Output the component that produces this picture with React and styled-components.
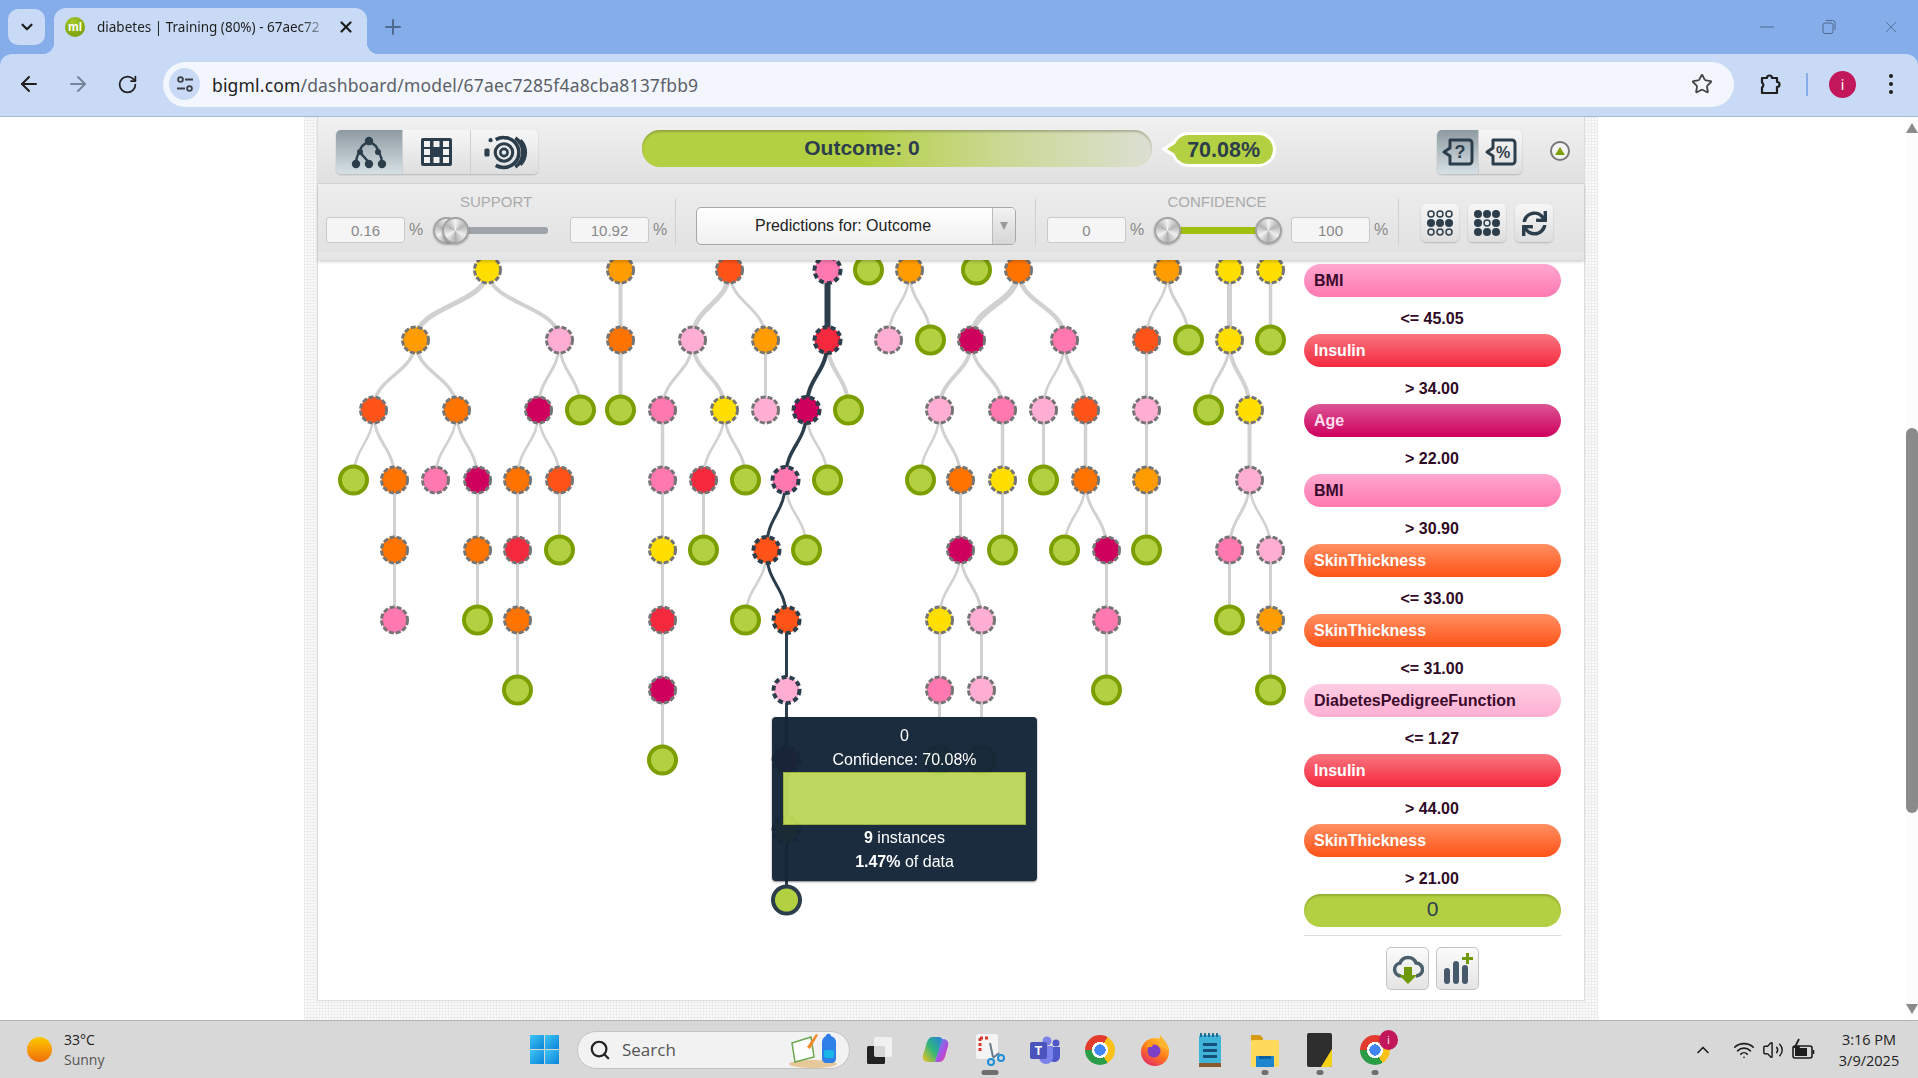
import React from "react";
import styled, { createGlobalStyle } from "styled-components";
import {
  ArrowLeft,
  ArrowRight,
  RotateCw,
  Star,
  ChevronDown,
  ChevronUp,
  Plus,
  X,
  Search,
  Wifi,
  Volume2
} from "lucide-react";
import { FaSync } from "react-icons/fa";

const DARK = "#2c3e4c";
const COLORS = {
  y: "#ffdf00",
  a: "#ff9d00",
  o: "#ff7300",
  r: "#ff5317",
  e: "#f4293e",
  c: "#cf005d",
  p: "#ff78b0",
  l: "#ffaed3",
  g: "#b3d042"
};

// x, colour key, on the selected path
const LEVELS = [
  [[487, "y"], [620, "a"], [729, "r"], [827, "p", 1], [868, "g"], [909, "a"], [976, "g"], [1018, "o"], [1167, "a"], [1229, "y"], [1270, "y"]],
  [[415, "a"], [559, "l"], [620, "o"], [692, "l"], [765, "a"], [827, "e", 1], [888, "l"], [930, "g"], [971, "c"], [1064, "p"], [1146, "r"], [1188, "g"], [1229, "y"], [1270, "g"]],
  [[373, "r"], [456, "o"], [538, "c"], [580, "g"], [620, "g"], [662, "p"], [724, "y"], [765, "l"], [806, "c", 1], [848, "g"], [939, "l"], [1002, "p"], [1043, "l"], [1085, "r"], [1146, "l"], [1208, "g"], [1249, "y"]],
  [[353, "g"], [394, "o"], [435, "p"], [477, "c"], [517, "o"], [559, "r"], [662, "p"], [703, "e"], [745, "g"], [785, "p", 1], [827, "g"], [920, "g"], [960, "o"], [1002, "y"], [1043, "g"], [1085, "o"], [1146, "a"], [1249, "l"]],
  [[394, "o"], [477, "o"], [517, "e"], [559, "g"], [662, "y"], [703, "g"], [766, "r", 1], [806, "g"], [960, "c"], [1002, "g"], [1064, "g"], [1106, "c"], [1146, "g"], [1229, "p"], [1270, "l"]],
  [[394, "p"], [477, "g"], [517, "o"], [662, "e"], [745, "g"], [786, "r", 1], [939, "y"], [981, "l"], [1106, "p"], [1229, "g"], [1270, "a"]],
  [[517, "g"], [662, "c"], [786, "l", 1], [939, "p"], [981, "l"], [1106, "g"], [1270, "g"]],
  [[662, "g"], [786, "c", 1], [939, "g"], [981, "g"]],
  [[786, "y", 1]],
  [[786, "g", 1]]
];

// level of parent, parent x, child x, width, on the selected path
const EDGES = [
  [0, 487, 415, 5], [0, 487, 559, 4], [0, 620, 620, 4], [0, 729, 692, 5], [0, 729, 765, 3], [0, 827, 827, 6, 1], [0, 909, 888, 2.5], [0, 909, 930, 3],
  [0, 1018, 971, 6], [0, 1018, 1064, 4.5], [0, 1167, 1146, 2.5], [0, 1167, 1188, 3], [0, 1229, 1229, 5], [0, 1270, 1270, 3.5],
  [1, 415, 373, 3.5], [1, 415, 456, 3.5], [1, 559, 538, 3], [1, 559, 580, 3], [1, 620, 620, 4], [1, 692, 662, 3], [1, 692, 724, 4], [1, 765, 765, 3],
  [1, 827, 806, 4, 1], [1, 827, 848, 4], [1, 971, 939, 4], [1, 971, 1002, 3.5], [1, 1064, 1043, 2.5], [1, 1064, 1085, 3.5], [1, 1146, 1146, 3], [1, 1229, 1208, 3], [1, 1229, 1249, 4],
  [2, 373, 353, 2.5], [2, 373, 394, 3], [2, 456, 435, 2.5], [2, 456, 477, 3], [2, 538, 517, 2.5], [2, 538, 559, 2.5], [2, 662, 662, 3.5], [2, 724, 703, 2.5], [2, 724, 745, 3],
  [2, 806, 785, 3.5, 1], [2, 806, 827, 2.5], [2, 939, 920, 2.5], [2, 939, 960, 3], [2, 1002, 1002, 3.5], [2, 1043, 1043, 3], [2, 1085, 1085, 3.5], [2, 1146, 1146, 3], [2, 1249, 1249, 4],
  [3, 394, 394, 3], [3, 477, 477, 3], [3, 517, 517, 3], [3, 559, 559, 3], [3, 662, 662, 3], [3, 703, 703, 3], [3, 785, 766, 3, 1], [3, 785, 806, 2.5], [3, 960, 960, 3], [3, 1002, 1002, 3],
  [3, 1085, 1064, 2.5], [3, 1085, 1106, 3], [3, 1146, 1146, 3], [3, 1249, 1229, 3], [3, 1249, 1270, 2.5],
  [4, 394, 394, 3], [4, 477, 477, 3], [4, 517, 517, 3], [4, 662, 662, 3], [4, 766, 745, 2.5], [4, 766, 786, 3, 1], [4, 960, 939, 2.5], [4, 960, 981, 3], [4, 1106, 1106, 3], [4, 1229, 1229, 3], [4, 1270, 1270, 3],
  [5, 517, 517, 3], [5, 662, 662, 3], [5, 786, 786, 3, 1], [5, 939, 939, 3], [5, 981, 981, 3], [5, 1106, 1106, 3], [5, 1270, 1270, 3],
  [6, 662, 662, 3], [6, 786, 786, 3, 1], [6, 939, 939, 3], [6, 981, 981, 3],
  [7, 786, 786, 3, 1], [8, 786, 786, 3, 1]
];

const levelY = level => 270 + level * 70;

const PILLS = [
  { name: "BMI", tone: "pink", rule: "<= 45.05" },
  { name: "Insulin", tone: "red", rule: "> 34.00" },
  { name: "Age", tone: "crimson", rule: "> 22.00" },
  { name: "BMI", tone: "pink", rule: "> 30.90" },
  { name: "SkinThickness", tone: "orange", rule: "<= 33.00" },
  { name: "SkinThickness", tone: "orange", rule: "<= 31.00" },
  { name: "DiabetesPedigreeFunction", tone: "light", rule: "<= 1.27" },
  { name: "Insulin", tone: "red", rule: "> 44.00" },
  { name: "SkinThickness", tone: "orange", rule: "> 21.00" }
];

const TONES = {
  pink: ["#ffa7cf", "#ff78b0", "#3a0a2c"],
  red: ["#f9757f", "#f4293e", "#fff"],
  crimson: ["#dc5595", "#cf005d", "#fde"],
  orange: ["#ff8f62", "#ff5317", "#fff"],
  light: ["#ffcde2", "#ffaed3", "#3a0a2c"]
};

const GlobalStyle = createGlobalStyle`
  html, body {
    margin: 0;
    padding: 0;
    width: 1918px;
    height: 1078px;
    overflow: hidden;
    background: #fff;
    font-family: "Liberation Sans", Arial, sans-serif;
  }
  * { box-sizing: border-box; }
`;

const Screen = styled.div`
  width: 1918px;
  height: 1078px;
  display: flex;
  flex-direction: column;
`;

const Chrome = styled.div`
  background: #85ade9;
  font-family: "Noto Sans", "Open Sans", sans-serif;
`;

const TabStrip = styled.div`
  height: 54px;
  display: flex;
  align-items: flex-end;
  padding-left: 8px;
  padding-right: 15px;
`;

const TabMenu = styled.div`
  width: 37px;
  height: 36px;
  margin-bottom: 9px;
  border-radius: 10px;
  background: #c8daf5;
  display: flex;
  align-items: center;
  justify-content: center;
  color: #1f1f1f;
`;

const Tab = styled.div`
  position: relative;
  width: 313px;
  height: 46px;
  margin-left: 9px;
  padding: 0 12px 8px 11px;
  background: #c8daf5;
  border-radius: 12px 12px 0 0;
  display: flex;
  align-items: center;
  &::before,
  &::after {
    content: "";
    position: absolute;
    bottom: 0;
    width: 12px;
    height: 12px;
  }
  &::before {
    left: -12px;
    background: radial-gradient(circle at 0 0, transparent 12px, #c8daf5 12.5px);
  }
  &::after {
    right: -12px;
    background: radial-gradient(circle at 100% 0, transparent 12px, #c8daf5 12.5px);
  }
`;

const Favicon = styled.span`
  width: 20px;
  height: 20px;
  border-radius: 50%;
  flex: none;
  background: radial-gradient(circle at 40% 30%, #a6c92b, #6f9400);
  color: #fff;
  font: bold 12px/20px "Liberation Sans", sans-serif;
  text-align: center;
`;

const TabTitle = styled.span`
  width: 232px;
  margin-left: 12px;
  font-size: 13.5px;
  white-space: nowrap;
  color: #1f1f1f;
  -webkit-mask-image: linear-gradient(90deg, #000 88%, transparent);
  mask-image: linear-gradient(90deg, #000 88%, transparent);
`;

const TabClose = styled.span`
  margin-left: auto;
  display: flex;
  color: #1f1f1f;
`;

const NewTab = styled.span`
  margin: 0 0 15px 14px;
  display: flex;
  color: #4f6a8f;
`;

const WindowButtons = styled.div`
  margin-left: auto;
  margin-bottom: 15px;
  display: flex;
  gap: 38px;
  color: #4f6a8f;
`;

const WindowButton = styled.span`
  width: 24px;
  height: 24px;
  display: flex;
  align-items: center;
  justify-content: center;
`;

const Toolbar = styled.div`
  display: flex;
  align-items: center;
  height: 63px;
  padding: 8px 0 10px 17px;
  background: #c8daf5;
  border-radius: 12px 12px 0 0;
  border-bottom: 1px solid #a9b9d0;
`;

const NavButton = styled.span`
  width: 24px;
  height: 24px;
  margin-right: ${p => p.$gap || 0}px;
  display: flex;
  align-items: center;
  justify-content: center;
  color: ${p => (p.$muted ? "#76859b" : "#1f1f1f")};
`;

const Address = styled.div`
  margin-left: 24px;
  width: 1571px;
  height: 45px;
  padding: 0 21px 0 6px;
  border-radius: 23px;
  background: #f3f7fd;
  display: flex;
  align-items: center;
`;

const SiteInfo = styled.span`
  width: 31px;
  height: 32px;
  border-radius: 50%;
  background: #c8daf5;
  display: flex;
  align-items: center;
  justify-content: center;
`;

const Url = styled.div`
  margin-left: 12px;
  padding-top: 1px;
  font-size: 17.5px;
  letter-spacing: 0.17px;
  color: #5b6068;
  b {
    font-weight: 400;
    color: #1c1c1c;
  }
`;

const StarSlot = styled.span`
  margin-left: auto;
  display: flex;
  color: #454545;
`;

const Puzzle = styled.span`
  margin-left: 24px;
  display: flex;
`;

const ToolbarRule = styled.span`
  margin-left: 24px;
  width: 2px;
  height: 23px;
  background: #85ade9;
`;

const Avatar = styled.span`
  margin-left: 21px;
  width: 27px;
  height: 27px;
  border-radius: 50%;
  background: #c2185b;
  color: #fff;
  font-size: 14px;
  line-height: 27px;
  text-align: center;
`;

const Kebab = styled.span`
  margin-left: 33px;
  width: 4px;
  display: flex;
  flex-direction: column;
  gap: 4px;
  i {
    width: 4px;
    height: 4px;
    border-radius: 50%;
    background: #1f1f1f;
  }
`;

const Page = styled.div`
  flex: 1;
  display: flex;
  min-height: 0;
`;

const PageBody = styled.div`
  flex: 1;
  padding-left: 304px;
`;

const Frame = styled.div`
  width: 1294px;
  height: 100%;
  padding: 0 13px 19px 13px;
  background-color: #fbfbfb;
  background-image: linear-gradient(#ececec 1px, transparent 1px), linear-gradient(90deg, #ececec 1px, transparent 1px);
  background-size: 3px 3px;
`;

const Panel = styled.div`
  height: 100%;
  display: flex;
  flex-direction: column;
  background: #fff;
  border: 1px solid #dedede;
  border-top: 0;
`;

const HeadTop = styled.div`
  height: 67px;
  padding: 13px 14px 0 18px;
  display: flex;
  align-items: flex-start;
  background: linear-gradient(#f1f1f1, #e0e0e0);
  border-bottom: 1px solid #d2d2d2;
`;

const HeadBottom = styled.div`
  height: 76px;
  padding-left: 8px;
  display: flex;
  align-items: flex-start;
  background: linear-gradient(#ededed, #e2e2e2 89%, #e8e8e8 89%, #e4e4e4);
  box-shadow: 0 2px 3px rgba(0, 0, 0, 0.18);
  position: relative;
  z-index: 1;
`;

const ButtonGroup = styled.div`
  display: flex;
  margin-left: ${p => p.$left || 0}px;
  border-radius: 5px;
  box-shadow: 0 1px 2px rgba(0, 0, 0, 0.2);
`;

const ToggleButton = styled.div`
  width: ${p => p.$w}px;
  height: 44px;
  display: flex;
  align-items: center;
  justify-content: center;
  background: ${p => (p.$active ? "linear-gradient(#8e9aa2, #d7e1e5)" : "linear-gradient(#f6f6f6, #dedede)")};
  border-right: 1px solid #cfcfcf;
  &:first-child {
    border-radius: 5px 0 0 5px;
  }
  &:last-child {
    border-radius: 0 5px 5px 0;
    border-right: 0;
  }
`;

const OutcomeBar = styled.div`
  margin-left: 104px;
  width: 514px;
  height: 37px;
  padding-right: 70px;
  border-radius: 18px;
  background: linear-gradient(90deg, #b3d042 0, #b3d042 42%, #cbd997 72%, #dcdfd2 100%);
  box-shadow: inset 0 2px 2px rgba(90, 90, 60, 0.35);
  color: ${DARK};
  font-size: 21px;
  font-weight: 700;
  line-height: 35px;
  text-align: center;
`;

const Bubble = styled.div`
  position: relative;
  margin: 2px 0 0 19px;
  width: 106px;
  height: 35px;
  border: 3px solid #fff;
  border-radius: 18px;
  background: #b3d042;
  color: ${DARK};
  font-size: 21.5px;
  font-weight: 700;
  line-height: 30px;
  text-align: center;
  &::before,
  &::after {
    content: "";
    position: absolute;
    border-style: solid;
    border-color: transparent;
    border-left-width: 0;
  }
  &::before {
    left: -13px;
    top: 6px;
    border-width: 8px 12px 8px 0;
    border-right-color: #fff;
  }
  &::after {
    left: -7px;
    top: 9px;
    border-width: 5px 8px 5px 0;
    border-right-color: #b3d042;
  }
`;

const CollapseToggle = styled.div`
  margin: 11px 0 0 28px;
  width: 20px;
  height: 20px;
  border-radius: 50%;
  border: 2px solid #777;
  background: #f4f4f4;
  display: flex;
  align-items: center;
  justify-content: center;
  &::after {
    content: "";
    border: 5px solid transparent;
    border-top: 0;
    border-bottom: 8px solid #7ca000;
  }
`;

const SliderGroup = styled.div`
  margin-left: ${p => p.$left || 0}px;
  padding-top: 10px;
`;

const GroupLabel = styled.div`
  width: 340px;
  height: 16px;
  margin-bottom: 6px;
  font-size: 15px;
  line-height: 16px;
  color: #aaa;
  text-align: center;
`;

const GroupControls = styled.div`
  display: flex;
  align-items: center;
`;

const NumberBox = styled.div`
  width: 79px;
  height: 26px;
  border: 1px solid #c9c9c9;
  border-radius: 3px;
  background: #f5f5f5;
  font-size: 15px;
  line-height: 25px;
  text-align: center;
  color: #888;
`;

const Percent = styled.span`
  width: 22px;
  font-size: 16px;
  color: #888;
  text-align: center;
`;

const Slider = styled.div`
  position: relative;
  width: 143px;
  height: 28px;
`;

const SliderTrack = styled.div`
  position: absolute;
  left: ${p => p.$from}px;
  width: ${p => p.$to - p.$from}px;
  top: 11px;
  height: 7px;
  border-radius: 3px;
  background: ${p => p.$color};
`;

const SliderHandle = styled.div`
  position: absolute;
  left: ${p => p.$at - 13.5}px;
  top: 1px;
  width: 27px;
  height: 27px;
  border-radius: 50%;
  border: 2px solid #a3a3a3;
  background: conic-gradient(#f2f2f2, #b5b5b5, #efefef, #b0b0b0, #f2f2f2, #b5b5b5, #f2f2f2);
  box-shadow: 0 1px 2px rgba(0, 0, 0, 0.3);
`;

const HeadRule = styled.div`
  margin: 15px 0 0 ${p => p.$left}px;
  width: 1px;
  height: 46px;
  background: #d0d0d0;
`;

const SelectBox = styled.div`
  margin: 23px 0 0 20px;
  width: 320px;
  height: 38px;
  display: flex;
  border: 1px solid #a8a8a8;
  border-radius: 5px;
  overflow: hidden;
  background: linear-gradient(#fff, #f0f0f0);
  font-size: 16px;
`;

const SelectValue = styled.div`
  flex: 1;
  padding-right: 3px;
  line-height: 36px;
  text-align: center;
  color: #222;
`;

const SelectArrow = styled.div`
  width: 23px;
  border-left: 1px solid #bbb;
  background: linear-gradient(#f2f2f2, #d6d6d6);
  display: flex;
  align-items: center;
  justify-content: center;
  &::after {
    content: "";
    border: 4px solid transparent;
    border-bottom: 0;
    border-top: 8px solid #9a9a9a;
  }
`;

const SquareButton = styled.div`
  margin: 20px 0 0 ${p => p.$left}px;
  width: 38px;
  height: 38px;
  border-radius: 5px;
  background: linear-gradient(#f6f6f6, #dedede);
  box-shadow: 0 1px 2px rgba(0, 0, 0, 0.2);
  display: flex;
  align-items: center;
  justify-content: center;
  color: ${DARK};
`;

const Body = styled.div`
  flex: 1;
  min-height: 0;
  display: flex;
`;

const TreeArea = styled.div`
  position: relative;
  width: 972px;
  flex: none;
  overflow: hidden;
`;

const TreeSvg = styled.svg`
  display: block;
`;

const Tooltip = styled.div`
  position: absolute;
  left: 454px;
  top: 457px;
  width: 265px;
  height: 164px;
  padding: 7px 11px 0;
  border-radius: 4px;
  background: #142638;
  opacity: 0.97;
  box-shadow: 0 1px 2px rgba(0, 0, 0, 0.5);
  color: #fff;
  font-size: 16px;
  line-height: 24px;
  text-align: center;
  b {
    font-weight: 700;
  }
`;

const TooltipBar = styled.div`
  height: 53px;
  margin-bottom: 1px;
  border: 1px solid #9ab040;
  background: #bcd65a;
`;

const Sidebar = styled.div`
  margin-left: 14px;
  width: 257px;
  padding-top: 4px;
`;

const Pill = styled.div`
  height: 33px;
  padding-left: 10px;
  border-radius: 17px;
  background: linear-gradient(${p => TONES[p.$tone][0]}, ${p => TONES[p.$tone][1]});
  color: ${p => TONES[p.$tone][2]};
  font-size: 16px;
  font-weight: 700;
  line-height: 33px;
`;

const Rule = styled.div`
  height: 37px;
  padding: 3px 1px 0 0;
  font-size: 16px;
  font-weight: 700;
  line-height: 37px;
  text-align: center;
  color: #2f0a26;
`;

const ResultPill = styled.div`
  height: 33px;
  border-radius: 17px;
  background: #b3d042;
  box-shadow: inset 0 2px 2px rgba(90, 110, 20, 0.35);
  color: ${DARK};
  font-size: 21px;
  line-height: 30px;
  text-align: center;
`;

const SidebarRule = styled.div`
  margin-top: 8px;
  height: 1px;
  background: #ddd;
`;

const SidebarActions = styled.div`
  margin-top: 11px;
  display: flex;
  justify-content: center;
  gap: 7px;
`;

const ActionButton = styled.div`
  width: 43px;
  height: 43px;
  border: 1px solid #c4c4c4;
  border-radius: 5px;
  background: linear-gradient(#fbfbfb, #e4e4e4);
  display: flex;
  align-items: center;
  justify-content: center;
`;

const Scrollbar = styled.div`
  width: 12px;
  flex: none;
  display: flex;
  flex-direction: column;
  align-items: center;
  padding: 6px 0;
  background: #fcfcfc;
`;

const ScrollArrow = styled.span`
  border: 6px solid transparent;
  ${p => (p.$down ? "border-bottom: 0; border-top: 10px solid #8a8a8a;" : "border-top: 0; border-bottom: 10px solid #8a8a8a;")}
`;

const ScrollThumb = styled.div`
  margin: 295px 0 auto;
  width: 12px;
  height: 385px;
  background: #8a8a8a;
  border-radius: 6px;
`;

const Taskbar = styled.div`
  height: 58px;
  flex: none;
  padding-left: 27px;
  display: flex;
  align-items: center;
  background: #d8d8d8;
  border-top: 1px solid #b4b4b4;
  font-family: "Open Sans", "Noto Sans", sans-serif;
`;

const Weather = styled.div`
  width: 503px;
  flex: none;
  display: flex;
  align-items: center;
  gap: 12px;
`;

const Sun = styled.span`
  width: 25px;
  height: 25px;
  border-radius: 50%;
  background: linear-gradient(#ffc800, #ee6e08);
`;

const WeatherText = styled.div`
  font-size: 14px;
  line-height: 20px;
  color: #222;
  small {
    display: block;
    font-size: 14px;
    color: #555;
  }
`;

const StartLogo = styled.div`
  width: 29px;
  height: 29px;
  flex: none;
  display: grid;
  grid-template-columns: 1fr 1fr;
  gap: 1px;
  i {
    background: linear-gradient(135deg, #3fc4f5, #0a84d8);
  }
`;

const SearchBox = styled.div`
  margin-left: 18px;
  width: 273px;
  height: 38px;
  flex: none;
  padding: 0 10px 0 11px;
  display: flex;
  align-items: center;
  border-radius: 19px;
  background: #f2f2f2;
  border: 1px solid #c4c4c4;
  color: #555;
  font-size: 17px;
`;

const SearchLabel = styled.span`
  margin-left: 11px;
  flex: 1;
`;

const AppSlots = styled.div`
  margin-left: 2px;
  display: flex;
`;

const AppSlot = styled.div`
  position: relative;
  width: 55px;
  height: 57px;
  display: flex;
  align-items: center;
  justify-content: center;
  &::after {
    content: "";
    display: ${p => (p.$mark ? "block" : "none")};
    position: absolute;
    bottom: 3px;
    left: 50%;
    transform: translateX(-50%);
    width: ${p => p.$mark}px;
    height: 5px;
    border-radius: 3px;
    background: #6f6f6f;
  }
`;

const ChromeBall = styled.span`
  width: 30px;
  height: 30px;
  border-radius: 50%;
  background: radial-gradient(circle, #4285f4 0 26%, #fff 27% 38%, transparent 39%),
    conic-gradient(from -90deg, #e33b2e 0 120deg, #fbc116 120deg 240deg, #2a9d46 240deg 360deg);
`;

const AppBadge = styled.span`
  position: absolute;
  left: 32px;
  top: 9px;
  width: 19px;
  height: 20px;
  border-radius: 50%;
  background: #c2185b;
  color: #fff;
  font-size: 10px;
  line-height: 20px;
  text-align: center;
`;

const Tray = styled.div`
  margin-left: auto;
  display: flex;
  align-items: center;
  color: #1d1d1d;
`;

const TrayIcon = styled.span`
  display: flex;
  margin-right: ${p => p.$gap}px;
`;

const Clock = styled.div`
  width: 76px;
  margin-right: 11px;
  font-size: 14.5px;
  line-height: 21px;
  text-align: center;
  color: #222;
`;

const TreeIcon = () => (
  <svg width="36" height="33" viewBox="0 0 36 33" fill={DARK} stroke={DARK} strokeWidth="2.4">
    <path d="M18 6C12 8 9 12 9 16 6 19 5 23 5 28M9 16C11 20 16 22 18 28M18 6C24 8 27 12 27 16 30 19 31 23 31 28" fill="none" />
    <circle cx="18" cy="5" r="3" />
    <circle cx="9" cy="16" r="1.8" />
    <circle cx="27" cy="16" r="1.8" />
    <circle cx="5" cy="28" r="3" />
    <circle cx="18" cy="28" r="3" />
    <circle cx="31" cy="28" r="3" />
  </svg>
);

const TableIcon = () => (
  <svg width="31" height="28" viewBox="0 0 31 28">
    <rect width="31" height="28" rx="2" fill={DARK} />
    {[3, 12.5, 22].map(x =>
      [3, 11, 19].map(y =>
        x === 12.5 && y === 11 ? null : <rect key={x + "-" + y} x={x} y={y} width="6" height="6" fill="#f2f2f2" />
      )
    )}
  </svg>
);

const SunburstIcon = () => (
  <svg width="48" height="35" viewBox="0 0 46 34" fill="none" stroke={DARK}>
    <circle cx="22" cy="17" r="3.5" strokeWidth="2.5" />
    <circle cx="22" cy="17" r="8.5" strokeWidth="3" />
    <path d="M14 4.5a15 15 0 0 1 8-2 14.5 14.5 0 0 1 0 29 15 15 0 0 1-8-2" strokeWidth="3.5" />
    <path d="M33 3a17 17 0 0 1 0 28" strokeWidth="3.5" />
    <path d="M38 5a17 17 0 0 1 0 24" strokeWidth="3" />
    <rect x="3" y="13" width="5" height="8" rx="1.5" fill={DARK} stroke="none" />
    <circle cx="9" cy="5" r="2" fill={DARK} stroke="none" />
  </svg>
);

const BraceBox = ({ label, small }) => (
  <svg width="34" height="30" viewBox="0 0 34 30">
    <path
      d="M9 3h19a3 3 0 0 1 3 3v18a3 3 0 0 1-3 3H9V19l-6-4 6-4z"
      fill="none"
      stroke={DARK}
      strokeWidth="3"
      strokeLinejoin="round"
    />
    <text x="19" y="21" textAnchor="middle" fontFamily="Liberation Sans" fontWeight="700" fontSize={small ? 16 : 18} fill={DARK}>
      {label}
    </text>
  </svg>
);

const DotsIcon = ({ mode }) => (
  <svg width="26" height="26" viewBox="0 0 26 26">
    {[4, 13, 22].map(y =>
      [4, 13, 22].map(x => {
        const center = x === 13 && y === 13;
        const filled = mode === "outer" ? !center : center || (y === 13 && mode === "inner");
        return (
          <circle
            key={x + "-" + y}
            cx={x}
            cy={y}
            r={filled ? 4 : 3}
            fill={filled ? DARK : "none"}
            stroke={DARK}
            strokeWidth={filled ? 0 : 1.5}
          />
        );
      })
    )}
  </svg>
);

const CloudIcon = () => (
  <svg width="32" height="32" viewBox="0 0 32 32">
    <path
      d="M9 23a6.5 6.5 0 0 1-1-12.9A8.5 8.5 0 0 1 24 10a6.5 6.5 0 0 1 0 13"
      fill="none"
      stroke="#4b5f6d"
      strokeWidth="3.5"
    />
    <path d="M12 14h8v8h5L16 31l-9-9h5z" fill="#6e9a00" />
  </svg>
);

const BarsPlusIcon = () => (
  <svg width="32" height="34" viewBox="0 0 32 34" fill="#46596a">
    <rect x="2" y="16" width="6" height="16" rx="3" />
    <rect x="11" y="9" width="6" height="23" rx="3" />
    <rect x="20" y="13" width="6" height="19" rx="3" />
    <path d="M24 1h3v4h4v3h-4v4h-3V8h-4V5h4z" fill="#6e9a00" />
  </svg>
);

const SiteInfoIcon = () => (
  <svg width="20" height="20" viewBox="0 0 20 20" fill="none" stroke="#3c4043" strokeWidth="1.8">
    <circle cx="5.5" cy="5.5" r="2.4" />
    <path d="M10 5.5h8M2 14.5h8" />
    <circle cx="14.5" cy="14.5" r="2.4" />
  </svg>
);

const PuzzleIcon = () => (
  <svg width="24" height="24" viewBox="0 0 24 24" fill="none" stroke="#1f1f1f" strokeWidth="2.2" strokeLinejoin="round">
    <path d="M4 6h5a2.5 2.5 0 0 1 5 0h5v4a2.5 2.5 0 0 1 0 5v6H4v-5.5a3 3 0 0 0 0-5z" />
  </svg>
);

const RestoreIcon = () => (
  <svg width="16" height="16" viewBox="0 0 16 16" fill="none" stroke="currentColor" strokeWidth="1">
    <rect x="2" y="4" width="10" height="10.5" rx="2" />
    <path d="M5 1.5h6.5a2.5 2.5 0 0 1 2.5 2.5v7" />
  </svg>
);

const TaskViewIcon = () => (
  <svg width="32" height="32" viewBox="0 0 32 32">
    <rect x="3" y="12" width="18" height="18" rx="1.5" fill="#222" />
    <rect x="10" y="3" width="18" height="20" rx="2" fill="#f5f5f5" opacity="0.85" />
  </svg>
);

const CopilotIcon = () => (
  <svg width="30" height="30" viewBox="0 0 30 30">
    <defs>
      <linearGradient id="copA" x1="0" y1="1" x2="1" y2="0">
        <stop offset="0" stopColor="#f6c21c" />
        <stop offset="0.5" stopColor="#2fb67c" />
        <stop offset="1" stopColor="#2a7de1" />
      </linearGradient>
      <linearGradient id="copB" x1="0" y1="0" x2="1" y2="1">
        <stop offset="0" stopColor="#3aa6f0" />
        <stop offset="0.6" stopColor="#b04be0" />
        <stop offset="1" stopColor="#f2567c" />
      </linearGradient>
    </defs>
    <path d="M12 2h7c2 0 3 1 3.500 3L15 27H8c-4 0-6-3-5-7L7 7c1-3 3-5 5-5z" fill="url(#copA)" />
    <path d="M15 27h4c3 0 5-2 6-5l3-11c1-4-1-7-5-7h-1z" fill="url(#copB)" />
  </svg>
);

const SnipIcon = () => (
  <svg width="30" height="34" viewBox="0 0 30 34">
    <rect x="1" y="1" width="22" height="25" rx="2" fill="#f4f4f4" />
    <path d="M5 5h9M5 5v13" stroke="#d9362b" strokeWidth="3" strokeDasharray="3 2" fill="none" />
    <path d="M15 10l3 14M24 20l-6 5" stroke="#6b7a88" strokeWidth="2" />
    <circle cx="16" cy="29" r="3" fill="none" stroke="#1f8fd6" strokeWidth="2" />
    <circle cx="26" cy="25" r="3" fill="none" stroke="#1f8fd6" strokeWidth="2" />
  </svg>
);

const TeamsIcon = () => (
  <svg width="32" height="30" viewBox="0 0 32 30">
    <circle cx="18" cy="6" r="4.500" fill="#7b83eb" />
    <circle cx="27" cy="8" r="3.500" fill="#5059c9" />
    <path d="M21 12h10v9c0 4-3 6-6 6-2 0-4-1-5-3z" fill="#5059c9" />
    <path d="M10 11h14v11c0 4-3 7-7 7s-7-3-7-7z" fill="#7b83eb" />
    <rect x="1" y="7" width="17" height="17" rx="2" fill="#4b53bc" />
    <text x="9.500" y="20" textAnchor="middle" fontFamily="Liberation Sans" fontWeight="700" fontSize="12" fill="#fff">T</text>
  </svg>
);

const FirefoxIcon = () => (
  <svg width="30" height="32" viewBox="0 0 30 32">
    <defs>
      <linearGradient id="ffx" x1="0.8" y1="0" x2="0.2" y2="1">
        <stop offset="0" stopColor="#ffcb2e" />
        <stop offset="0.5" stopColor="#ff7a1a" />
        <stop offset="1" stopColor="#e3246b" />
      </linearGradient>
    </defs>
    <circle cx="15" cy="18" r="14" fill="url(#ffx)" />
    <path d="M20 1c3 4 8 8 9 15L19 12z" fill="#ffb52e" />
    <circle cx="14" cy="17" r="6.500" fill="#7c3fc8" />
    <path d="M5 13c3-4 7-6 9-5l-2 5z" fill="#ff9a1f" />
  </svg>
);

const NotepadIcon = () => (
  <svg width="24" height="36" viewBox="0 0 24 36">
    <rect x="1" y="3" width="22" height="28" rx="1.500" fill="#3fb4d8" />
    <path d="M3 1v4M7 1v4M11 1v4M15 1v4M19 1v4" stroke="#14658a" strokeWidth="1.800" />
    <rect x="5" y="11" width="14" height="3" fill="#14507a" />
    <rect x="5" y="17" width="14" height="3" fill="#14507a" />
    <rect x="5" y="23" width="14" height="3" fill="#14507a" />
    <rect x="1" y="31" width="22" height="4" fill="#8a5a2c" />
  </svg>
);

const ExplorerIcon = () => (
  <svg width="32" height="36" viewBox="0 0 32 36">
    <path d="M2 3h9l3 3v8H2z" fill="#d79b12" />
    <rect x="2" y="8" width="28" height="27" rx="1.500" fill="#ffd95c" />
    <rect x="7" y="24" width="18" height="11" fill="#1d86cf" />
    <rect x="10" y="24" width="12" height="3" fill="#0b5ea0" />
  </svg>
);

const StickyIcon = () => (
  <svg width="25" height="34" viewBox="0 0 25 34">
    <rect width="25" height="34" rx="2" fill="#2e2e2e" />
    <path d="M25 16v16a2 2 0 0 1-2 2H14z" fill="#f7d117" />
  </svg>
);

const SearchArt = () => (
  <svg width="50" height="38" viewBox="0 0 50 38">
    <ellipse cx="24" cy="33" rx="24" ry="4" fill="#e7c999" />
    <path d="M3 12l19-6 3 20-19 5z" fill="#fdfdfd" stroke="#6aa84f" strokeWidth="1.500" />
    <path d="M18 16 27 3l2 1-8 14z" fill="#f08b2c" />
    <path d="M33 28V11c0-3 2-5 4-6 0-3 5-3 5 0 3 1 5 3 5 6v17c0 2-2 4-4 4h-6c-2 0-4-2-4-4z" fill="#2f7fe8" />
    <rect x="35" y="19" width="10" height="8" rx="2" fill="#1ab6e8" />
  </svg>
);

const BatteryIcon = () => (
  <svg width="24" height="24" viewBox="0 0 24 24" fill="none" stroke="#1d1d1d" strokeWidth="1.600">
    <rect x="2" y="8" width="19" height="12" rx="2" />
    <rect x="4" y="10" width="12" height="8" fill="#1d1d1d" stroke="none" />
    <path d="M22.500 12v4" />
    <path d="M8 1 4 9h4l-2 6" strokeWidth="1.800" />
  </svg>
);

const VolumeWifi = () => (
  <>
    <TrayIcon $gap={7}>
      <Wifi size={22} strokeWidth={1.8} />
    </TrayIcon>
    <TrayIcon $gap={7}>
      <Volume2 size={22} strokeWidth={1.6} />
    </TrayIcon>
  </>
);

const TreeDiagram = () => {
  const edgePath = ([level, x1, x2]) => {
    const y1 = levelY(level);
    const y2 = levelY(level + 1);
    const mid = (y1 + y2) / 2;
    return `M${x1} ${y1}C${x1} ${mid} ${x2} ${mid} ${x2} ${y2}`;
  };
  return (
    <TreeSvg width="972" height="741" viewBox="317.5 260 972 741" fill="none">
      {EDGES.filter(e => !e[4]).map((e, i) => (
        <path key={i} d={edgePath(e)} stroke="#d1d1d1" strokeWidth={e[3]} />
      ))}
      {EDGES.filter(e => e[4]).map((e, i) => (
        <path key={i} d={edgePath(e)} stroke={DARK} strokeWidth={e[3]} />
      ))}
      {LEVELS.map((nodes, level) =>
        nodes.map(([x, key, onPath]) => {
          const leaf = key === "g";
          return (
            <circle
              key={level + "-" + x}
              cx={x}
              cy={levelY(level)}
              r={leaf ? 13.5 : 13}
              fill={COLORS[key]}
              stroke={onPath ? DARK : leaf ? "#7c9f00" : "#757575"}
              strokeWidth={leaf || onPath ? 4 : 3}
              strokeDasharray={leaf ? "none" : onPath ? "5 3" : "5 2"}
            />
          );
        })
      )}
    </TreeSvg>
  );
};

const App = () => (
  <Screen>
    <GlobalStyle />
    <Chrome>
      <TabStrip>
        <TabMenu>
          <ChevronDown size={18} strokeWidth={3} />
        </TabMenu>
        <Tab>
          <Favicon>ml</Favicon>
          <TabTitle>diabetes | Training (80%) - 67aec72</TabTitle>
          <TabClose>
            <X size={18} strokeWidth={3} />
          </TabClose>
        </Tab>
        <NewTab>
          <Plus size={24} strokeWidth={2} />
        </NewTab>
        <WindowButtons>
          <WindowButton>
            <svg width="16" height="2" viewBox="0 0 16 2">
              <path d="M1 1h14" stroke="currentColor" />
            </svg>
          </WindowButton>
          <WindowButton>
            <RestoreIcon />
          </WindowButton>
          <WindowButton>
            <X size={20} strokeWidth={1} />
          </WindowButton>
        </WindowButtons>
      </TabStrip>
      <Toolbar>
        <NavButton $gap={25}>
          <ArrowLeft size={24} strokeWidth={2} />
        </NavButton>
        <NavButton $gap={25} $muted>
          <ArrowRight size={24} strokeWidth={2} />
        </NavButton>
        <NavButton>
          <RotateCw size={21} strokeWidth={2} />
        </NavButton>
        <Address>
          <SiteInfo>
            <SiteInfoIcon />
          </SiteInfo>
          <Url>
            <b>bigml.com</b>/dashboard/model/67aec7285f4a8cba8137fbb9
          </Url>
          <StarSlot>
            <Star size={22} strokeWidth={2} />
          </StarSlot>
        </Address>
        <Puzzle>
          <PuzzleIcon />
        </Puzzle>
        <ToolbarRule />
        <Avatar>i</Avatar>
        <Kebab>
          <i />
          <i />
          <i />
        </Kebab>
      </Toolbar>
    </Chrome>

    <Page>
      <PageBody>
        <Frame>
          <Panel>
            <HeadTop>
              <ButtonGroup>
                <ToggleButton $w={67} $active>
                  <TreeIcon />
                </ToggleButton>
                <ToggleButton $w={68}>
                  <TableIcon />
                </ToggleButton>
                <ToggleButton $w={67}>
                  <SunburstIcon />
                </ToggleButton>
              </ButtonGroup>
              <OutcomeBar>Outcome: 0</OutcomeBar>
              <Bubble>70.08%</Bubble>
              <ButtonGroup $left={161}>
                <ToggleButton $w={42} $active>
                  <BraceBox label="?" />
                </ToggleButton>
                <ToggleButton $w={43}>
                  <BraceBox label="%" small />
                </ToggleButton>
              </ButtonGroup>
              <CollapseToggle />
            </HeadTop>
            <HeadBottom>
              <SliderGroup>
                <GroupLabel>SUPPORT</GroupLabel>
                <GroupControls>
                  <NumberBox>0.16</NumberBox>
                  <Percent>%</Percent>
                  <Slider>
                    <SliderTrack $from={28} $to={121} $color="#9ea4a9" />
                    <SliderHandle $at={19} />
                    <SliderHandle $at={28} />
                  </Slider>
                  <NumberBox>10.92</NumberBox>
                  <Percent>%</Percent>
                </GroupControls>
              </SliderGroup>
              <HeadRule $left={4} />
              <SelectBox>
                <SelectValue>Predictions for: Outcome</SelectValue>
                <SelectArrow />
              </SelectBox>
              <HeadRule $left={19} />
              <SliderGroup $left={11}>
                <GroupLabel>CONFIDENCE</GroupLabel>
                <GroupControls>
                  <NumberBox>0</NumberBox>
                  <Percent>%</Percent>
                  <Slider>
                    <SliderTrack $from={19} $to={120} $color="#a0c010" />
                    <SliderHandle $at={19} />
                    <SliderHandle $at={120} />
                  </Slider>
                  <NumberBox>100</NumberBox>
                  <Percent>%</Percent>
                </GroupControls>
              </SliderGroup>
              <HeadRule $left={6} />
              <SquareButton $left={22}>
                <DotsIcon mode="inner" />
              </SquareButton>
              <SquareButton $left={9}>
                <DotsIcon mode="outer" />
              </SquareButton>
              <SquareButton $left={9}>
                <FaSync size={25} />
              </SquareButton>
            </HeadBottom>
            <Body>
              <TreeArea>
                <TreeDiagram />
                <Tooltip>
                  <div>0</div>
                  <div>Confidence: 70.08%</div>
                  <TooltipBar />
                  <div>
                    <b>9</b> instances
                  </div>
                  <div>
                    <b>1.47%</b> of data
                  </div>
                </Tooltip>
              </TreeArea>
              <Sidebar>
                {PILLS.map((pill, i) => (
                  <React.Fragment key={i}>
                    <Pill $tone={pill.tone}>{pill.name}</Pill>
                    <Rule>{pill.rule}</Rule>
                  </React.Fragment>
                ))}
                <ResultPill>0</ResultPill>
                <SidebarRule />
                <SidebarActions>
                  <ActionButton>
                    <CloudIcon />
                  </ActionButton>
                  <ActionButton>
                    <BarsPlusIcon />
                  </ActionButton>
                </SidebarActions>
              </Sidebar>
            </Body>
          </Panel>
        </Frame>
      </PageBody>
      <Scrollbar>
        <ScrollArrow />
        <ScrollThumb />
        <ScrollArrow $down />
      </Scrollbar>
    </Page>

    <Taskbar>
      <Weather>
        <Sun />
        <WeatherText>
          33°C
          <small>Sunny</small>
        </WeatherText>
      </Weather>
      <StartLogo>
        <i />
        <i />
        <i />
        <i />
      </StartLogo>
      <SearchBox>
        <Search size={22} strokeWidth={2.4} color="#222" />
        <SearchLabel>Search</SearchLabel>
        <SearchArt />
      </SearchBox>
      <AppSlots>
        <AppSlot>
          <TaskViewIcon />
        </AppSlot>
        <AppSlot>
          <CopilotIcon />
        </AppSlot>
        <AppSlot $mark={17}>
          <SnipIcon />
        </AppSlot>
        <AppSlot>
          <TeamsIcon />
        </AppSlot>
        <AppSlot>
          <ChromeBall />
        </AppSlot>
        <AppSlot>
          <FirefoxIcon />
        </AppSlot>
        <AppSlot>
          <NotepadIcon />
        </AppSlot>
        <AppSlot $mark={7}>
          <ExplorerIcon />
        </AppSlot>
        <AppSlot $mark={7}>
          <StickyIcon />
        </AppSlot>
        <AppSlot $mark={7}>
          <ChromeBall />
          <AppBadge>i</AppBadge>
        </AppSlot>
      </AppSlots>
      <Tray>
        <TrayIcon $gap={20}>
          <ChevronUp size={20} strokeWidth={2} />
        </TrayIcon>
        <VolumeWifi />
        <TrayIcon $gap={16}>
          <BatteryIcon />
        </TrayIcon>
        <Clock>
          3:16 PM
          <br />
          3/9/2025
        </Clock>
      </Tray>
    </Taskbar>
  </Screen>
);

export default App;
